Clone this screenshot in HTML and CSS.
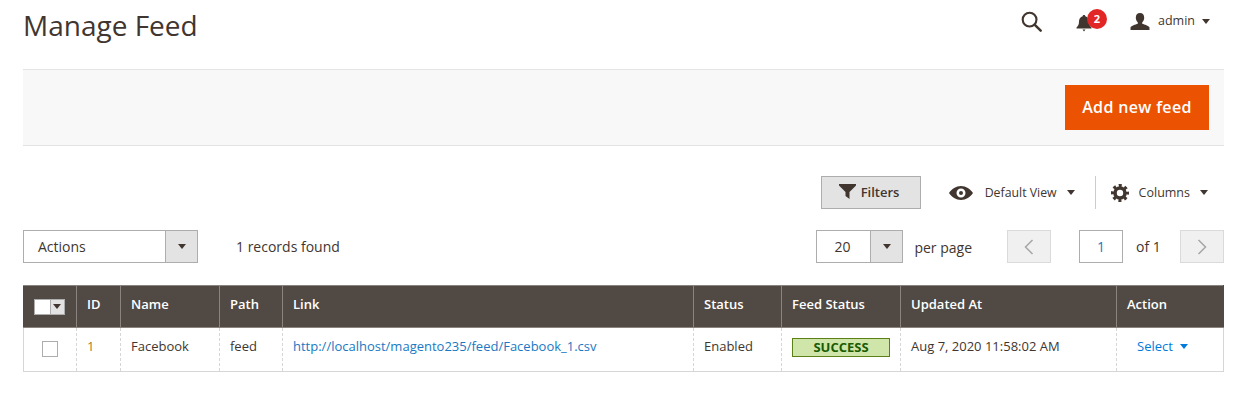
FILE: index.html
```html
<!DOCTYPE html>
<html lang="en">
<head>
<meta charset="utf-8">
<title>Manage Feed</title>
<link rel="stylesheet" href="styles.css">
</head>
<body>
<header class="page-header">
  <h1 class="title">Manage Feed</h1>
  <div class="header-actions">
    <svg class="icon-search" width="23" height="23" viewBox="0 0 24 24"><circle cx="10" cy="10" r="7.2" fill="none" stroke="#41362f" stroke-width="2.2"/><path d="M15.2 15.2 L21.6 21.6" stroke="#41362f" stroke-width="2.6" stroke-linecap="round"/></svg>
    <div class="bell">
      <svg width="16" height="18" viewBox="0 0 16 18"><path d="M8 1c.8 0 1.3.5 1.3 1.2C11.800 3 13 5 13 7.500c0 3 .8 4.500 2.500 6v1H.5v-1C2.200 12 3 10.500 3 7.500 3 5 4.200 3 6.700 2.200 6.700 1.500 7.200 1 8 1z M6.500 15.500h3L8 17.500z" fill="#41362f"/></svg>
      <span class="badge">2</span>
    </div>
    <div class="user">
      <svg width="20" height="19" viewBox="0 0 20 19"><path d="M10 1c2.800 0 4.200 2 4.200 4.800 0 2-1 3.700-2 4.700v1.300c2.500 1 6.300 1.800 7.300 3.700V18H.5v-2.500c1-1.900 4.800-2.700 7.300-3.700v-1.300c-1-1-2-2.700-2-4.700C5.800 3 7.200 1 10 1z" fill="#41362f"/></svg>
      <span class="user-name">admin</span>
      <span class="caret"></span>
    </div>
  </div>
</header>

<section class="action-band">
  <button class="primary-btn">Add new feed</button>
</section>

<section class="grid-tools">
  <button class="filters-btn">
    <svg width="17" height="15" viewBox="0 0 17 15"><path d="M0 0h17v1.500L10.500 8v7l-4-3V8L0 1.500z" fill="#41362f"/></svg>
    <span>Filters</span>
  </button>
  <div class="view-switch">
    <svg width="24" height="14" viewBox="0 0 24 14"><path fill-rule="evenodd" d="M12 0c5 0 9.300 3 12 7-2.700 4-7 7-12 7S2.700 11 0 7c2.700-4 7-7 12-7zm0 2.500a4.500 4.500 0 1 0 0 9 4.500 4.500 0 0 0 0-9zm0 2.500a2 2 0 1 1 0 4 2 2 0 0 1 0-4z" fill="#41362f"/></svg>
    <span class="view-label">Default View</span>
    <span class="caret"></span>
  </div>
  <div class="columns-switch">
    <svg width="18" height="18" viewBox="0 0 18 18"><circle cx="9" cy="9" r="5" fill="none" stroke="#41362f" stroke-width="3.6"/><circle cx="9" cy="9" r="7.500" fill="none" stroke="#41362f" stroke-width="3" stroke-dasharray="3 2.890" stroke-dashoffset="1.500"/></svg>
    <span class="view-label">Columns</span>
    <span class="caret"></span>
  </div>
</section>

<section class="pager-row">
  <div class="select-box actions-select">
    <span class="select-value">Actions</span>
    <span class="select-toggle"><span class="caret"></span></span>
  </div>
  <span class="records">1 records found</span>
  <div class="pager">
    <div class="select-box perpage-select">
      <span class="select-value">20</span>
      <span class="select-toggle"><span class="caret"></span></span>
    </div>
    <span class="per-page">per page</span>
    <button class="page-btn page-prev"><svg width="10" height="16" viewBox="0 0 10 16"><path d="M8.500 1 L1.500 8 L8.500 15" fill="none" stroke="#a6a6a6" stroke-width="1.500"/></svg></button>
    <span class="page-input">1</span>
    <span class="page-of">of 1</span>
    <button class="page-btn"><svg width="10" height="16" viewBox="0 0 10 16"><path d="M1.500 1 L8.500 8 L1.500 15" fill="none" stroke="#a6a6a6" stroke-width="1.500"/></svg></button>
  </div>
</section>

<table class="grid">
  <colgroup>
    <col class="c-check"><col class="c-id"><col class="c-name"><col class="c-path"><col class="c-link"><col class="c-status"><col class="c-feed"><col class="c-updated"><col class="c-action">
  </colgroup>
  <thead>
    <tr>
      <th class="cell-check"><span class="mass"><span class="mass-box"></span><span class="mass-toggle"><span class="caret caret-small"></span></span></span></th>
      <th>ID</th>
      <th>Name</th>
      <th>Path</th>
      <th>Link</th>
      <th>Status</th>
      <th>Feed Status</th>
      <th>Updated At</th>
      <th>Action</th>
    </tr>
  </thead>
  <tbody>
    <tr>
      <td class="cell-check"><span class="checkbox"></span></td>
      <td class="cell-id">1</td>
      <td>Facebook</td>
      <td>feed</td>
      <td><a class="link" href="#">http://localhost/magento235/feed/Facebook_1.csv</a></td>
      <td>Enabled</td>
      <td><span class="success">SUCCESS</span></td>
      <td>Aug 7, 2020 11:58:02 AM</td>
      <td class="cell-action"><a class="link" href="#">Select</a><span class="caret caret-blue"></span></td>
    </tr>
  </tbody>
</table>
</body>
</html>
```
FILE: styles.css
```css
* { box-sizing: border-box; }
html, body { margin: 0; padding: 0; }
body {
  width: 1241px;
  height: 401px;
  overflow: hidden;
  padding: 0 17px 0 23px;
  background: #fff;
  color: #41362f;
  font-family: "Open Sans", "Liberation Sans", sans-serif;
  font-size: 14px;
}
button { font-family: inherit; cursor: pointer; }

.caret {
  display: inline-block;
  width: 0;
  height: 0;
  border-left: 4px solid transparent;
  border-right: 4px solid transparent;
  border-top: 5px solid #41362f;
}
.caret-small { border-left-width: 4px; border-right-width: 4px; border-top-width: 5px; }
.caret-blue { border-top-color: #007bdb; margin-left: 7px; vertical-align: 2px; }

.page-header {
  height: 69px;
  display: flex;
  justify-content: space-between;
  align-items: flex-start;
  padding-right: 14px;
}
.title {
  margin: 6px 0 0;
  font-size: 28px;
  line-height: 38px;
  font-weight: 400;
  color: #41362f;
}
.header-actions { display: flex; align-items: center; padding-top: 10px; }
.icon-search { display: block; }
.bell { position: relative; margin-left: 33px; width: 16px; height: 18px; margin-top: 2px; }
.bell svg { display: block; }
.badge {
  position: absolute;
  left: 11px;
  top: -5px;
  width: 20px;
  height: 20px;
  border-radius: 50%;
  background: #e22626;
  color: #fff;
  font-size: 11px;
  font-weight: 700;
  line-height: 20px;
  text-align: center;
}
.user { display: flex; align-items: center; margin-left: 38px; }
.user svg { display: block; }
.user-name { margin-left: 8px; font-size: 12.500px; line-height: 20px; margin-top: -1px; }
.user .caret { margin-left: 7px; }

.action-band {
  height: 77px;
  display: flex;
  justify-content: flex-end;
  align-items: center;
  padding: 0 15px 0 0;
  background: #f8f8f8;
  border-top: 1px solid #e3e3e3;
  border-bottom: 1px solid #e3e3e3;
}
.primary-btn {
  width: 144px;
  height: 45px;
  border: 0;
  background: #eb5202;
  color: #fff;
  font-size: 16px;
  font-weight: 600;
  letter-spacing: .35px;
  padding: 0 0 2px;
}

.grid-tools {
  display: flex;
  justify-content: flex-end;
  align-items: center;
  margin-top: 30px;
  height: 33px;
  padding-right: 16px;
}
.filters-btn {
  width: 100px;
  height: 33px;
  display: flex;
  align-items: center;
  gap: 5px;
  background: #e3e3e3;
  border: 1px solid #adadad;
  color: #41362f;
  font-size: 13px;
  font-weight: 600;
  padding: 0 0 2px 17px;
}
.view-switch { display: flex; align-items: center; margin-left: 28px; height: 33px; }
.view-label { font-size: 12.300px; color: #41362f; }
.view-switch .view-label { margin-left: 12px; }
.view-switch .caret { margin-left: 10px; }
.columns-switch {
  display: flex;
  align-items: center;
  height: 33px;
  margin-left: 20px;
  padding-left: 15px;
  border-left: 1px solid #cccccc;
}
.columns-switch .view-label { margin-left: 10px; font-size: 12.500px; }
.columns-switch .caret { margin-left: 10px; }

.pager-row {
  display: flex;
  align-items: center;
  margin-top: 21px;
  height: 33px;
}
.select-box {
  display: flex;
  height: 33px;
  border: 1px solid #adadad;
  background: #fff;
}
.actions-select { width: 175px; }
.select-value { flex: 1; font-size: 14px; line-height: 31px; padding-left: 14px; }
.select-toggle {
  width: 32px;
  background: #e3e3e3;
  border-left: 1px solid #adadad;
  display: flex;
  align-items: center;
  justify-content: center;
}
.records { margin-left: 38px; font-size: 14px; }
.pager { margin-left: auto; display: flex; align-items: center; }
.perpage-select { width: 87px; }
.perpage-select .select-value { padding-left: 17px; }
.per-page { margin: 2px 0 0 11px; font-size: 14px; }
.page-btn {
  width: 44px;
  height: 33px;
  display: flex;
  align-items: center;
  justify-content: center;
  background: #f0f0f0;
  border: 1px solid #dadada;
  padding: 0;
}
.page-prev { margin-left: 35px; }
.page-input {
  width: 44px;
  height: 33px;
  margin-left: 28px;
  border: 1px solid #adadad;
  text-align: center;
  line-height: 31px;
  font-size: 14px;
  color: #1979c3;
}
.page-of { margin-left: 13px; width: 44px; font-size: 14px; }

.grid {
  margin-top: 22px;
  width: 1200px;
  border-collapse: collapse;
  table-layout: fixed;
}
.c-check { width: 53px; }
.c-id { width: 44px; }
.c-name { width: 99px; }
.c-path { width: 63px; }
.c-link { width: 411px; }
.c-status { width: 88px; }
.c-feed { width: 119px; }
.c-updated { width: 216px; }
.c-action { width: 107px; }
.grid th {
  height: 42px;
  padding: 0 10px 5px;
  background: #514943;
  color: #fff;
  font-size: 13px;
  font-weight: 600;
  text-align: left;
  border: 1px solid #8a837f;
}
.grid th:first-child { border-left-color: #514943; }
.grid th:last-child { border-right-color: #514943; }
.grid td {
  height: 44px;
  padding: 0 10px 8px;
  font-size: 13px;
  background: #fff;
  border-left: 1px dashed #d6d6d6;
  border-right: 1px dashed #d6d6d6;
  border-bottom: 1px solid #d6d6d6;
}
.grid td:first-child { border-left: 1px solid #d6d6d6; }
.grid td:last-child { border-right: 1px solid #d6d6d6; }
.grid .cell-check { padding: 0 0 2px; text-align: center; }
.grid td.cell-check { padding-bottom: 4px; }
.mass { display: inline-flex; vertical-align: middle; width: 31px; height: 16px; margin-left: -2px; border: 1px solid #adadad; background: #fff; }
.mass-box { width: 15px; background: #fff; }
.mass-toggle { flex: 1; background: #e3e3e3; border-left: 1px solid #adadad; display: flex; align-items: center; justify-content: center; }
.checkbox { display: inline-block; vertical-align: middle; width: 16px; height: 16px; border: 1px solid #adadad; background: #fff; }
.cell-id { color: #ae7a2c; }
.link { color: #1979c3; text-decoration: none; }
.cell-action .link { color: #007bdb; }
.grid .cell-action { padding-left: 20px; }
.success {
  display: block;
  height: 19px;
  width: 98px;
  margin-top: 3px;
  background: #d0e5a9;
  border: 1px solid #5b8116;
  color: #185b00;
  font-size: 13px;
  font-weight: 700;
  line-height: 17px;
  text-align: center;
}
```
